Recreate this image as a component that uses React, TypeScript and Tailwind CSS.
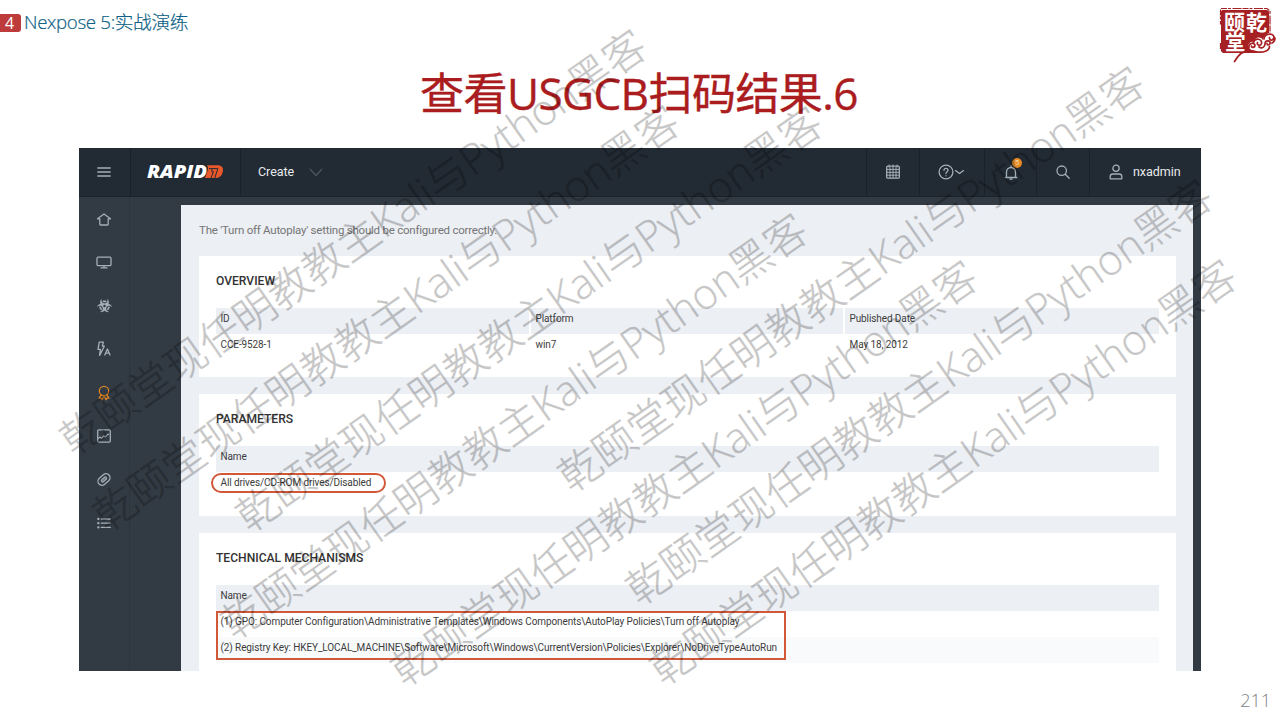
import type { ReactNode } from 'react';
import { FaBiohazard } from 'react-icons/fa6';

const WATERMARKS = [
  'left-[354px] top-[241px]',
  'left-[387px] top-[317px]',
  'left-[530px] top-[318px]',
  'left-[515px] top-[425px]',
  'left-[852px] top-[278px]',
  'left-[685px] top-[472px]',
  'left-[920px] top-[391px]',
  'left-[944px] top-[471px]',
];

function Watermark({ place }: { place: string }) {
  return (
    <div
      className={`absolute flex w-[707px] -translate-x-1/2 -translate-y-1/2 -rotate-35 items-center text-[42.150px] leading-none font-light whitespace-nowrap text-black opacity-22 [-webkit-text-stroke:0.3px_black] ${place}`}
    >
      <span>乾颐堂现任明教教主Kali与Python黑客</span>
    </div>
  );
}

function Icon({ size = 16, children }: { size?: number; children: ReactNode }) {
  return (
    <svg
      width={size}
      height={size}
      viewBox="0 0 16 16"
      fill="none"
      stroke="currentColor"
      strokeWidth="1.3"
      strokeLinecap="round"
      strokeLinejoin="round"
    >
      {children}
    </svg>
  );
}

const NAV: { name: string; icon: ReactNode; active?: boolean }[] = [
  { name: 'home', icon: <Icon><path d="M1.500 7.800 8 3l6.500 4.800h-2.300v5.400a.8.8 0 0 1-.8.8H4.600a.8.8 0 0 1-.8-.8V7.800z" /></Icon> },
  { name: 'assets', icon: <Icon><rect x="1" y="3.200" width="14" height="8.400" rx="1.200" /><path d="M8 11.600v2M5 13.900h6" /></Icon> },
  { name: 'vulnerabilities', icon: <span className="flex size-4 items-center justify-center"><FaBiohazard size={15} /></span> },
  {
    name: 'automation',
    icon: (
      <Icon>
        <path d="M3.200 1.200h4.200L6.300 5.200h2L3.600 14.400l.8-6H2z" />
        <path d="M8.800 14 11.400 8 14 14M9.700 12.200h3.400" />
      </Icon>
    ),
  },
  {
    name: 'policies',
    active: true,
    icon: (
      <Icon>
        <circle cx="8" cy="6" r="4.700" />
        <path d="M5.300 10 3 13.200l2-.1.800 1.700L8 11l2.200 3.800.8-1.700 2 .1L10.700 10" />
      </Icon>
    ),
  },
  {
    name: 'reports',
    icon: (
      <Icon>
        <rect x="1.700" y="1.900" width="12.600" height="12.200" rx="1" />
        <path strokeWidth="1.100" d="m2.300 10.200 2-1.200 1 1.500 2.600-2.500 1.600 1 2.200-2.600h.9" />
      </Icon>
    ),
  },
  {
    name: 'tickets',
    icon: (
      <Icon>
        <g transform="rotate(-42 8 8.500)">
          <rect x="1.300" y="4.500" width="13.400" height="8" rx="4" />
          <rect x="5" y="7.100" width="6" height="2.800" rx="1" fill="currentColor" fillOpacity=".6" strokeWidth="1" />
        </g>
      </Icon>
    ),
  },
  {
    name: 'administration',
    icon: (
      <Icon>
        <path d="M5.300 4h9M5.300 8.200h9M5.300 12.400h9" />
        <path strokeWidth="2.300" d="M2.300 4h.1M2.300 8.200h.1M2.300 12.400h.1" />
      </Icon>
    ),
  },
];

function SealLogo() {
  return (
    <svg width="60" height="56" viewBox="0 0 60 56">
      <path fill="#a61f22" d="M4 3h45l2 1.500v30c-1 6-4 11-10 11.500H5l-2-2V4.500z" />
      <path fill="none" stroke="#a61f22" strokeWidth="1.200" strokeDasharray="6 1 3 1.500 9 1" d="M3 1.500h46l3 2.500v22M2.500 2.500v15M2.500 36v6l3 3.500h14" />
      <g fill="#fff" fontFamily="'Noto Sans CJK SC', sans-serif" fontWeight="700">
        <text x="6" y="22.500" fontSize="21">颐</text>
        <text x="28" y="22.500" fontSize="21">乾</text>
        <text x="7" y="42.500" fontSize="20.500">堂</text>
      </g>
      <path fill="#fff" d="M30 40c0-4 3-6 6-5 0-5 7-6 9-2 1-6 6-8 9-6l5 2-2 8c-5 7-10 8-14 8-5 1-10-1-13-5z" />
      <g fill="none" stroke="#a61f22" strokeWidth="1.700" strokeLinecap="round">
        <path d="M16.500 54.500c5-9 12-12.500 21-10 8 2 14-1 14-5" />
        <path d="M31 41c-1-5 5-6 6-3 0 3-4 3-3.500 1M35.500 35.500c1-5 9-4 8 1-1 3-5 2-4-1M41 40c3 2 6 0 6-3 0-4 6-4 5-.5-.5 2-3 2-3 0M46 32c0-5 9-7 10-2 0 4-5 4-4.500.5M54 36c2-1 3-3 3-5" />
      </g>
    </svg>
  );
}

function TopCell({ className, children }: { className: string; children: ReactNode }) {
  return (
    <div className={`flex h-full shrink-0 items-center border-l border-[#1a2129] ${className}`}>{children}</div>
  );
}

function TopBar() {
  return (
    <header className="flex h-[49px] shrink-0 items-center border-b border-[#1b2128] bg-[#222a33] text-[12.500px] tracking-[-0.050px] text-[#e8ebee]">
      <div className="flex w-[51px] justify-center pr-[1px] text-[#a4afb8]">
        <Icon>
          <path d="M1.800 4h12.400M1.800 8h12.400M1.800 12h12.400" />
        </Icon>
      </div>
      <TopCell className="w-[110px] pl-[15px]">
        <svg width="80" height="16" viewBox="0 0 80 16">
          <text x="1" y="14" fontFamily="'Open Sans', sans-serif" fontWeight="800" fontStyle="italic" fontSize="17.500" textLength="60" lengthAdjust="spacingAndGlyphs" fill="#fff">RAPID</text>
          <path fill="#e8582a" d="M62.500 1.200H71c5 0 6.800 2.500 5.800 6.500-1 4.500-3.500 6.300-8 6.300h-9.800L61 8.500c1.200-3 1.500-5 0-7.300z" />
          <path fill="none" stroke="#222a33" strokeWidth="1" d="M63 4.600h8.800L68.800 14M66 5v2.800h1.400L65 14" />
        </svg>
      </TopCell>
      <TopCell className="grow gap-[15px] pl-[17px]">
        <span>Create</span>
        <svg width="14" height="9" viewBox="0 0 14 9" fill="none" stroke="#4d565f" strokeWidth="1.200">
          <path d="m1 1 6 6.500L13 1" />
        </svg>
      </TopCell>
      <TopCell className="w-[53px] justify-center text-[#a4afb8]">
        <Icon>
          <rect x="1.700" y="2.200" width="12.600" height="12" rx="1" />
          <path strokeWidth="1" d="M1.700 5.400h12.600M1.700 8.300h12.600M1.700 11.200h12.600M5 3.500v10.500M8 3.500v10.500M11 3.500v10.500M4 1v2M8 1v2M12 1v2" />
        </Icon>
      </TopCell>
      <TopCell className="w-[65px] justify-center pr-[2px] text-[#a4afb8]">
        <svg width="27" height="16" viewBox="0 0 27 16" fill="none" stroke="currentColor" strokeWidth="1.300" strokeLinecap="round" strokeLinejoin="round">
          <circle cx="8" cy="8" r="6.900" />
          <path d="M6 6.300c.1-2.600 4-2.500 4 0 0 1.500-2 1.500-2 3.200M8 11.700v.1M17.500 6.600l4 3 4-3" />
        </svg>
      </TopCell>
      <TopCell className="w-[52px] justify-center text-[#a4afb8]">
        <div className="relative flex">
          <Icon>
            <path d="M2.200 13.500h11.600M3.500 13.500V8a4.500 4.500 0 0 1 9 0v5.500M8 3.200V2M7 15.200h2" />
          </Icon>
          <span className="absolute -top-[6px] left-[9.500px] flex size-[10px] items-center justify-center rounded-full bg-[#e58a24] text-[8px] leading-none text-[#f5cf9f]">
            5
          </span>
        </div>
      </TopCell>
      <TopCell className="w-[53px] justify-center text-[#a4afb8]">
        <Icon>
          <circle cx="6.700" cy="6.700" r="4.700" />
          <path d="m10.200 10.200 4 4" />
        </Icon>
      </TopCell>
      <TopCell className="w-[112px] gap-[9px] pl-[18px]">
        <span className="text-[#a4afb8]">
          <Icon>
            <circle cx="8" cy="4.300" r="3.100" />
            <path d="M2.200 14.800v-2.300c0-1.600 1-2.500 2.600-2.500h6.400c1.600 0 2.600.9 2.600 2.500v2.300z" />
          </Icon>
        </span>
        <span>nxadmin</span>
      </TopCell>
    </header>
  );
}

function Card({ title, className, children }: { title: string; className: string; children: ReactNode }) {
  return (
    <section className={`shrink-0 bg-white px-[17px] pt-[15px] ${className}`}>
      <h2 className="h-[36.500px] text-[12.100px] leading-5 font-medium tracking-normal text-[#333]">{title}</h2>
      {children}
    </section>
  );
}

function Cell({ className = '', children }: { className?: string; children: ReactNode }) {
  return <div className={`h-[26px] pl-[4.500px] leading-[21px] whitespace-nowrap ${className}`}>{children}</div>;
}

export default function App() {
  return (
    <div className="relative flex h-[720px] w-[1280px] flex-col overflow-hidden bg-white font-['Open_Sans','Noto_Sans_CJK_SC',sans-serif]">
      <div className="flex h-[148px] shrink-0 items-start">
        <div className="flex w-[420px] items-center pt-[10px]">
          <span className="mt-[1px] flex h-[18px] w-[21px] items-center justify-center rounded-r-[3px] bg-[#be3b3c] pr-[2px] text-[16px] leading-none font-normal text-white">
            4
          </span>
          <span className="ml-[3px] text-[18.700px] leading-6 font-light tracking-[-0.330px] whitespace-nowrap text-[#0f6286] [-webkit-text-stroke:0.2px_#0f6286]">
            Nexpose 5:实战演练
          </span>
        </div>
        <h1 className="w-[440px] pt-[63px] text-[44px] leading-[60px] tracking-[-0.550px] whitespace-nowrap text-[#aa1c1e] [-webkit-text-stroke:0.4px_#aa1c1e]">
          查看USGCB扫码结果.6
        </h1>
        <div className="ml-auto pt-[7px] pr-[2px]">
          <SealLogo />
        </div>
      </div>

      <div className="ml-[79px] flex h-[523px] w-[1122px] shrink-0 flex-col overflow-hidden bg-[#323a43] font-['Roboto',sans-serif]">
        <TopBar />
        <div className="flex min-h-0 grow">
          <nav className="flex w-[51px] shrink-0 flex-col items-center gap-[27.400px] border-r border-[#2c343c] pt-[14px] text-[#a4afb8]">
            {NAV.map((item) => (
              <span key={item.name} className={item.active ? 'flex text-[#d98425]' : 'flex'}>
                {item.icon}
              </span>
            ))}
          </nav>
          <main className="mt-2 ml-[51px] flex w-[1012px] flex-col bg-[#eceff4] pr-[17px] pl-[18px] text-[10px] tracking-[-0.105px] text-[#3c3c3c]">
            <p className="h-[51px] shrink-0 pt-[15px] text-[11.500px] leading-5 tracking-[-0.230px] text-[#757575]">
              The 'Turn off Autoplay' setting should be configured correctly.
            </p>
            <Card title="OVERVIEW" className="h-[121px]">
              <div className="grid grid-cols-[313px_312px_314px] gap-x-[2px]">
                <Cell className="bg-[#eceff4]">ID</Cell>
                <Cell className="bg-[#eceff4]">Platform</Cell>
                <Cell className="bg-[#eceff4]">Published Date</Cell>
                <Cell>CCE-9528-1</Cell>
                <Cell>win7</Cell>
                <Cell>May 18, 2012</Cell>
              </div>
            </Card>
            <Card title="PARAMETERS" className="mt-[17px] h-[122px]">
              <Cell className="bg-[#eceff4]">Name</Cell>
              <div className="relative">
                <Cell>All drives/CD-ROM drives/Disabled</Cell>
                <span className="absolute top-[1px] -left-[5px] h-[20px] w-[175px] rounded-full border-2 border-[#d2583a]" />
              </div>
            </Card>
            <Card title="TECHNICAL MECHANISMS" className="mt-[17px] h-[160px]">
              <Cell className="bg-[#eceff4]">Name</Cell>
              <div className="relative">
                <Cell>(1) GPO: Computer Configuration\Administrative Templates\Windows Components\AutoPlay Policies\Turn off Autoplay</Cell>
                <Cell className="bg-[#f9fafb]">
                  (2) Registry Key: HKEY_LOCAL_MACHINE\Software\Microsoft\Windows\CurrentVersion\Policies\Explorer\NoDriveTypeAutoRun
                </Cell>
                <span className="absolute top-0 left-0 h-[49px] w-[570px] border-2 border-[#d2583a]" />
              </div>
            </Card>
          </main>
        </div>
      </div>

      <footer className="flex h-[49px] items-center justify-end pt-[10px] pr-[9px] text-[18px] font-light text-[#808080]">
        211
      </footer>

      {WATERMARKS.map((place) => (
        <Watermark key={place} place={place} />
      ))}
    </div>
  );
}
